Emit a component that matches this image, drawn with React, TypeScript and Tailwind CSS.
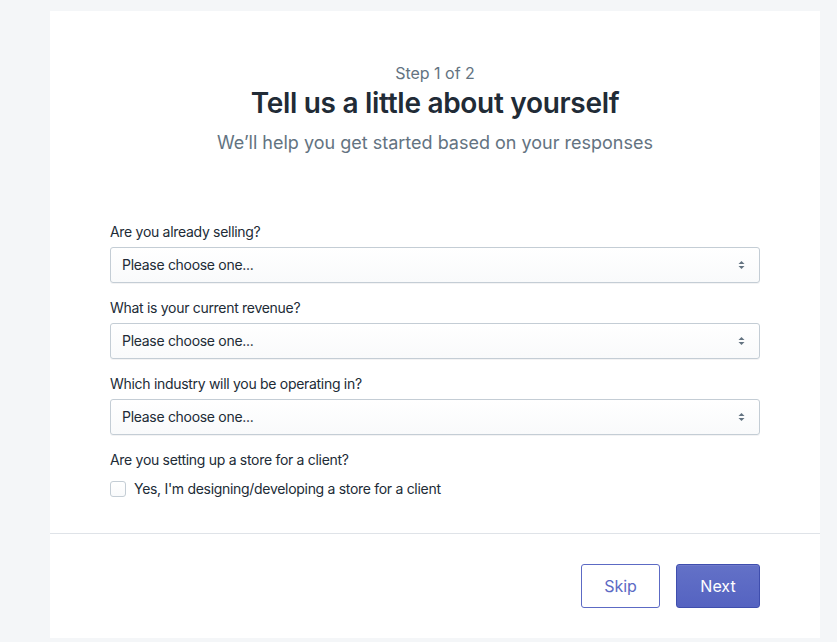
const questions = [
  "Are you already selling?",
  "What is your current revenue?",
  "Which industry will you be operating in?",
];

function SelectField({ label }: { label: string }) {
  return (
    <div className="flex flex-col">
      <label className="text-[14px] leading-5 tracking-[-0.3px] text-[#212b36]">{label}</label>
      <div className="mt-[5px] flex h-9 items-center justify-between rounded-[3px] border border-[#c4cdd5] bg-gradient-to-b from-white to-[#f9fafb] pl-[11px] pr-[13px] shadow-[0_1px_0_0_rgba(22,29,37,0.05)]">
        <span className="text-[14px] leading-5 tracking-[-0.3px] text-[#212b36]">Please choose one...</span>
        <svg width="9" height="10" viewBox="0 0 9 10" className="text-[#637381]">
          <path d="M4.5 1 L7.5 4 H1.5 Z" fill="currentColor" />
          <path d="M4.5 9 L7.5 6 H1.5 Z" fill="currentColor" />
        </svg>
      </div>
    </div>
  );
}

export default function App() {
  return (
    <div className="min-h-[642px] bg-[#f4f6f8] pt-[11px] font-['Inter',sans-serif]">
      <div className="ml-[50px] w-[770px] bg-white">
        <div className="flex flex-col items-center pt-[50px]">
          <p className="text-[16px] leading-6 text-[#637381]">Step 1 of 2</p>
          <h1 className="mt-[2px] text-[28px] font-semibold leading-8 tracking-[-0.3px] text-[#212b36]">
            Tell us a little about yourself
          </h1>
          <p className="mt-[10px] text-[18px] leading-7 text-[#637381]">
            We’ll help you get started based on your responses
          </p>
        </div>

        <div className="mt-[65px] flex flex-col gap-[15px] px-[60px]">
          {questions.map((q) => (
            <SelectField key={q} label={q} />
          ))}
          <div>
            <p className="text-[14px] leading-5 tracking-[-0.3px] text-[#212b36]">Are you setting up a store for a client?</p>
            <label className="mt-[9px] flex items-center gap-2">
              <span className="h-4 w-4 rounded-[3px] border border-[#c4cdd5] bg-gradient-to-b from-white to-[#f9fafb]" />
              <span className="text-[14px] leading-5 tracking-[-0.3px] text-[#212b36]">Yes, I'm designing/developing a store for a client</span>
            </label>
          </div>
        </div>

        <div className="mt-[34px] border-t border-[#dfe3e8]" />

        <div className="flex justify-end gap-4 px-[60px] pb-[30px] pt-[30px]">
          <button className="h-11 w-[79px] rounded-[3px] border border-[#5c6ac4] bg-white text-[16px] text-[#5c6ac4]">
            Skip
          </button>
          <button className="h-11 w-[84px] rounded-[3px] border border-[#3f4eae] bg-gradient-to-b from-[#6371c7] to-[#5563c1] text-[16px] text-white shadow-[inset_0_1px_0_0_#6f7bcb]">
            Next
          </button>
        </div>
      </div>
    </div>
  );
}
